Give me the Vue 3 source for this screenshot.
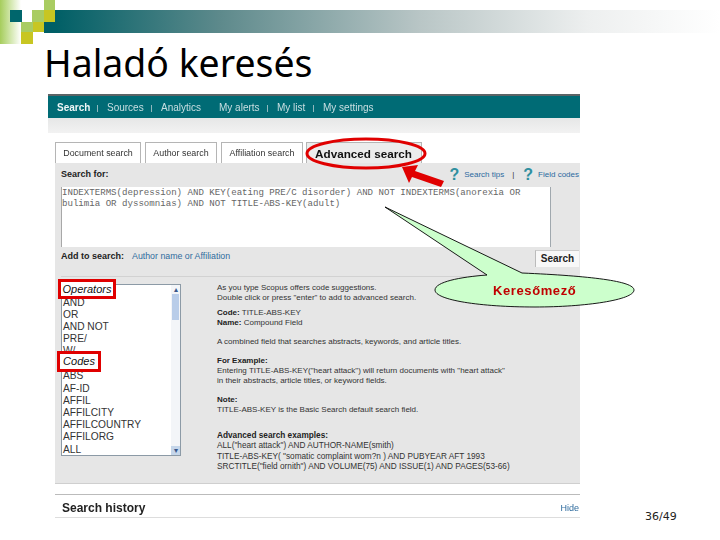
<script setup>
const navItems = [
  { label: 'Search', w: 50, active: true, sep: true },
  { label: 'Sources', w: 54, sep: true },
  { label: 'Analytics', w: 58, sep: false },
  { label: 'My alerts', w: 58, sep: true },
  { label: 'My list', w: 46, sep: true },
  { label: 'My settings', w: 60, sep: false }
]
const tabs = [
  { label: 'Document search', w: 86 },
  { label: 'Author search', w: 72 },
  { label: 'Affiliation search', w: 82 }
]
const listTop = ['AND', 'OR', 'AND NOT', 'PRE/', 'W/']
const listBottom = ['ABS', 'AF-ID', 'AFFIL', 'AFFILCITY', 'AFFILCOUNTRY', 'AFFILORG', 'ALL']
</script>

<template>
  <div class="page">
    <svg class="deco" width="720" height="45" viewBox="0 0 720 45">
      <defs>
        <linearGradient id="barFade" x1="0" x2="1" y1="0" y2="0">
          <stop offset="0" stop-color="#005f66" />
          <stop offset="0.25" stop-color="#5e8a8c" />
          <stop offset="0.55" stop-color="#b9c6c6" />
          <stop offset="0.8" stop-color="#edefef" />
          <stop offset="1" stop-color="#ffffff" />
        </linearGradient>
        <linearGradient id="sideFade" x1="0" x2="1" y1="0" y2="0">
          <stop offset="0" stop-color="#a6cd5c" />
          <stop offset="0.35" stop-color="#c4df93" />
          <stop offset="1" stop-color="#ffffff" />
        </linearGradient>
      </defs>
      <rect x="44" y="22" width="11" height="11" fill="#005f66" />
      <rect x="55" y="10" width="665" height="23" fill="url(#barFade)" />
      <rect x="0" y="0" width="21" height="44" fill="url(#sideFade)" />
      <rect x="10" y="10" width="12" height="12" fill="#00666c" />
      <rect x="32" y="10" width="12" height="12" fill="#a9cc62" />
      <rect x="44" y="0" width="11" height="10" fill="#a9cc62" />
      <rect x="44" y="10" width="11" height="12" fill="#c8c622" />
      <rect x="21" y="22" width="12" height="10" fill="#a9cc62" />
      <rect x="33" y="22" width="11" height="10" fill="#c8c622" />
      <rect x="21" y="32" width="12" height="12" fill="#c8c622" />
    </svg>

    <h1 class="title">Haladó keresés</h1>

    <div class="content">
      <div class="shot">
        <nav class="nav">
          <template v-for="item in navItems" :key="item.label">
            <span class="nav-item" :class="{ active: item.active, divided: item.sep }" :style="{ width: item.w + 'px' }">{{ item.label }}</span>
          </template>
        </nav>
        <div class="strip"></div>
        <div class="tabs">
          <span v-for="tab in tabs" :key="tab.label" class="tab" :style="{ width: tab.w + 'px' }">{{ tab.label }}</span>
          <span class="tab tab-adv">Advanced search</span>
        </div>

        <section class="panel">
          <div class="search-head">
            <b>Search for:</b>
            <div class="help">
              <span class="q">?</span><span class="help-link">Search tips</span><span class="pipe">|</span>
              <span class="q q2">?</span><span class="help-link">Field codes</span>
            </div>
          </div>
          <div class="query">INDEXTERMS(depression) AND KEY(eating PRE/C disorder) AND NOT INDEXTERMS(anorexia OR<br>bulimia OR dyssomnias) AND NOT TITLE-ABS-KEY(adult)</div>
          <div class="add-row">
            <b>Add to search:</b>
            <span class="link">Author name or Affiliation</span>
            <span class="search-btn">Search</span>
          </div>

          <div class="lower">
            <div class="listbox">
              <div class="list-items">
                <div class="opt tagged first"><i class="tag tag-op">Operators</i></div>
                <div v-for="o in listTop" :key="o" class="opt">{{ o }}</div>
                <div class="opt tagged second"><i class="tag tag-code">Codes</i></div>
                <div v-for="o in listBottom" :key="o" class="opt">{{ o }}</div>
              </div>
              <div class="scroll">
                <span class="arrow">▴</span>
                <span class="thumb"></span>
                <span class="arrow arrow-down">▾</span>
              </div>
            </div>
            <div class="info">
              <p>As you type Scopus offers code suggestions.<br>Double click or press "enter" to add to advanced search.</p>
              <p class="g5"><b>Code:</b> TITLE-ABS-KEY<br><b>Name:</b> Compound Field</p>
              <p class="g9">A combined field that searches abstracts, keywords, and article titles.</p>
              <p class="g9"><b>For Example:</b><br>Entering TITLE-ABS-KEY("heart attack") will return documents with "heart attack"<br>in their abstracts, article titles, or keyword fields.</p>
              <p class="g9"><b>Note:</b><br>TITLE-ABS-KEY is the Basic Search default search field.</p>
              <p class="examples"><b>Advanced search examples:</b><br>ALL("heart attack") AND AUTHOR-NAME(smith)<br>TITLE-ABS-KEY( "somatic complaint wom?n ) AND PUBYEAR AFT 1993<br>SRCTITLE("field ornith") AND VOLUME(75) AND ISSUE(1) AND PAGES(53-66)</p>
            </div>
          </div>
        </section>

        <div class="history">
          <b>Search history</b>
          <span class="hide">Hide</span>
        </div>
      </div>
      <span class="page-no">36/49</span>
    </div>

    <svg class="marks" width="720" height="540" viewBox="0 0 720 540">
      <ellipse cx="366" cy="153.500" rx="59" ry="14.500" fill="none" stroke="#e00000" stroke-width="3" />
      <polygon points="402,167 418,165 415,171 444,181 441,187 412,177 409,183" fill="#e00000" />
      <path d="M385 207 L522 273 C590 276 634 281 634 290 C634 300 585 307 535 307 C480 307 435 300 435 290 C435 282 460 277 487 275 Z" fill="#ccffcc" stroke="#000" stroke-width="0.9" />
    </svg>
    <span class="callout-text">Keresőmező</span>
  </div>
</template>

<style>
html, body { margin: 0; background: #fff; }
</style>

<style scoped>
.page {
  position: relative;
  width: 720px;
  height: 540px;
  overflow: hidden;
  background: #fff;
  font-family: "Liberation Sans", Arial, sans-serif;
}
.deco { display: block; }
.title {
  margin: 0 0 0 44px;
  height: 49px;
  font: 400 37.400px/35px "Noto Sans", sans-serif;
  color: #000;
}
.content { display: flex; align-items: flex-end; margin-left: 48px; }
.shot {
  width: 532px;
  height: 424px;
  flex: none;
  border-top: 2px solid #5c6466;
  box-sizing: border-box;
  filter: blur(0.45px);
  color: #222;
}
.nav {
  height: 22px;
  background: #006b75;
  display: flex;
  align-items: center;
  padding-left: 9px;
  font-size: 10px;
  color: #c9dfe2;
}
.nav-item { display: block; white-space: nowrap; position: relative; flex: none; }
.nav-item.active { color: #eef6f7; font-weight: 700; }
.nav-item.divided::after {
  content: "";
  position: absolute;
  right: 9px;
  top: 3px;
  width: 1px;
  height: 7px;
  background: #8fb8bd;
}
.strip { height: 15px; background: linear-gradient(#e6e7e7, #f2f2f2); }
.tabs {
  height: 30px;
  box-sizing: border-box;
  padding: 9px 0 0 7px;
  display: flex;
  gap: 4px;
  font-size: 8.900px;
}
.tab {
  box-sizing: border-box;
  height: 21px;
  border: 1px solid #b5b5b5;
  border-bottom: 0;
  background: #fff;
  color: #333;
  display: flex;
  align-items: center;
  justify-content: center;
  white-space: nowrap;
}
.tab-adv {
  width: 116px;
  margin-left: -1px;
  background: #ececec;
  font-size: 11.700px;
  font-weight: 700;
  color: #111;
  padding-right: 1px;
}
.panel {
  margin-left: 7px;
  height: 321px;
  box-sizing: border-box;
  padding-top: 1px;
  background: #e6e6e6;
  border-bottom: 1px solid #cfcfcf;
  position: relative;
}
.search-head {
  height: 20px;
  margin-bottom: 3px;
  padding: 0 1px 0 6px;
  display: flex;
  align-items: center;
  justify-content: space-between;
  font-size: 9px;
}
.help { display: flex; align-items: center; color: #2b6aa0; font-size: 8px; }
.q { color: #2f8f9f; font: 700 16px/14px "Liberation Sans", sans-serif; margin: 2px 5px 0 0; }
.q2 { margin-left: 9px; }
.help-link { white-space: nowrap; }
.pipe { margin-left: 8px; color: #333; }
.query {
  margin: 0 29px 0 6px;
  height: 60px;
  box-sizing: border-box;
  background: #fff;
  border-left: 1px solid #a8a8a8;
  border-right: 1px solid #a0a8ae;
  font: 9.100px/11px "Liberation Mono", monospace;
  color: #666;
  white-space: nowrap;
}
.add-row {
  height: 30px;
  box-sizing: border-box;
  padding-top: 3px;
  margin-left: 6px;
  display: flex;
  align-items: flex-start;
  font-size: 9px;
  line-height: 12px;
  border-bottom: 1px solid #d2d2d2;
}
.link { margin-left: 8px; font-size: 8.800px; color: #2f6c9e; white-space: nowrap; }
.search-btn {
  margin-left: auto;
  width: 44px;
  height: 17px;
  margin-right: 1px;
  background: #f8f8f8;
  border-left: 1px solid #bbb;
  border-top: 1px solid #ccc;
  box-sizing: border-box;
  display: flex;
  align-items: center;
  justify-content: center;
  font-size: 10px;
  font-weight: 700;
  color: #222;
}
.lower {
  display: flex;
  padding: 7px 0 0 6px;
  align-items: flex-start;
}
.listbox {
  width: 120px;
  height: 172px;
  flex: none;
  box-sizing: border-box;
  border: 1px solid #8c9aa6;
  background: #fff;
  display: flex;
  position: relative;
}
.list-items {
  flex: 1;
  padding: 0 0 0 1px;
  font-size: 10.200px;
  line-height: 12.200px;
  color: #333;
}
.opt { height: 12.200px; white-space: nowrap; }
.tagged { position: relative; }
.tagged.first { height: 11.500px; }
.tagged.second { height: 13px; }
.tag {
  position: absolute;
  z-index: 1;
  color: #111;
  background: #fff;
  border: 3px solid #e00000;
  box-sizing: border-box;
  display: flex;
  align-items: center;
  justify-content: center;
  font-size: 11px;
}
.tag-op { left: -5px; top: -6px; width: 58px; height: 20px; }
.tag-code { left: -6px; top: -6.500px; width: 44px; height: 21px; }
.scroll {
  width: 9px;
  flex: none;
  background: #f3f5f8;
  display: flex;
  flex-direction: column;
  align-items: center;
  color: #39578a;
  font-size: 8px;
  line-height: 9px;
}
.arrow { height: 9px; }
.arrow-down { margin-top: auto; background: #c5d6ea; width: 9px; text-align: center; }
.thumb { width: 7px; height: 26px; background: #b9cde9; }
.info {
  margin: -1px 0 0 36px;
  font-size: 8px;
  line-height: 10px;
  color: #333;
  white-space: nowrap;
}
.info b { color: #222; }
.info p { margin: 0; }
.info .g5 { margin-top: 5px; }
.info .g9 { margin-top: 9px; }
.info .examples { margin-top: 16px; font-size: 8.250px; line-height: 10.400px; }
.history {
  margin: 10px 0 0 7px;
  height: 24px;
  box-sizing: border-box;
  padding: 3px 0 0 7px;
  border-top: 1px solid #bbb;
  border-bottom: 1px solid #ddd;
  display: flex;
  align-items: center;
  justify-content: space-between;
  font-size: 12px;
  color: #222;
}
.hide { font-size: 9px; color: #2f6c9e; padding-right: 1px; }
.page-no {
  margin: 0 0 -5px 65px;
  font: 11px/12px "DejaVu Sans", sans-serif;
  color: #222;
}
.marks { position: absolute; left: 0; top: 0; pointer-events: none; filter: blur(0.3px); }
.callout-text {
  position: absolute;
  left: 493px;
  top: 284px;
  font-size: 13px;
  line-height: 14px;
  font-weight: 700;
  color: #c00000;
  letter-spacing: 0.600px;
}
</style>
